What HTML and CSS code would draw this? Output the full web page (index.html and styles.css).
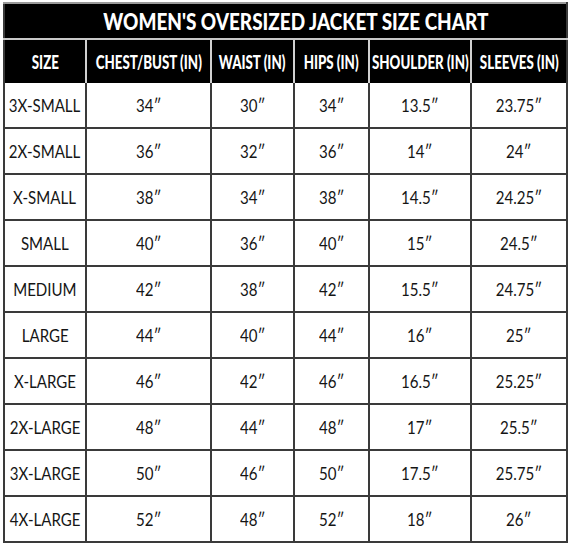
FILE: index.html
```html
<!DOCTYPE html>
<html>
<head>
<meta charset="utf-8">
<link rel="stylesheet" href="styles.css">
</head>
<body>
<table class="chart">
  <colgroup>
    <col class="c1"><col class="c2"><col class="c3"><col class="c4"><col class="c5"><col class="c6">
  </colgroup>
  <thead>
    <tr class="title-row"><th colspan="6"><div class="box"><span class="title">WOMEN'S OVERSIZED JACKET SIZE CHART</span></div></th></tr>
    <tr class="head-row">
      <th><div class="box"><span class="hd">SIZE</span></div></th>
      <th><div class="box"><span class="hd">CHEST/BUST (IN)</span></div></th>
      <th><div class="box"><span class="hd">WAIST (IN)</span></div></th>
      <th><div class="box"><span class="hd">HIPS (IN)</span></div></th>
      <th><div class="box"><span class="hd">SHOULDER (IN)</span></div></th>
      <th><div class="box"><span class="hd">SLEEVES (IN)</span></div></th>
    </tr>
  </thead>
  <tbody>
    <tr><td><div class="box"><span class="v">3X-SMALL</span></div></td><td><div class="box"><span class="v">34″</span></div></td><td><div class="box"><span class="v">30″</span></div></td><td><div class="box"><span class="v">34″</span></div></td><td><div class="box"><span class="v">13.5″</span></div></td><td><div class="box"><span class="v">23.75″</span></div></td></tr>
    <tr><td><div class="box"><span class="v">2X-SMALL</span></div></td><td><div class="box"><span class="v">36″</span></div></td><td><div class="box"><span class="v">32″</span></div></td><td><div class="box"><span class="v">36″</span></div></td><td><div class="box"><span class="v">14″</span></div></td><td><div class="box"><span class="v">24″</span></div></td></tr>
    <tr><td><div class="box"><span class="v">X-SMALL</span></div></td><td><div class="box"><span class="v">38″</span></div></td><td><div class="box"><span class="v">34″</span></div></td><td><div class="box"><span class="v">38″</span></div></td><td><div class="box"><span class="v">14.5″</span></div></td><td><div class="box"><span class="v">24.25″</span></div></td></tr>
    <tr><td><div class="box"><span class="v">SMALL</span></div></td><td><div class="box"><span class="v">40″</span></div></td><td><div class="box"><span class="v">36″</span></div></td><td><div class="box"><span class="v">40″</span></div></td><td><div class="box"><span class="v">15″</span></div></td><td><div class="box"><span class="v">24.5″</span></div></td></tr>
    <tr><td><div class="box"><span class="v">MEDIUM</span></div></td><td><div class="box"><span class="v">42″</span></div></td><td><div class="box"><span class="v">38″</span></div></td><td><div class="box"><span class="v">42″</span></div></td><td><div class="box"><span class="v">15.5″</span></div></td><td><div class="box"><span class="v">24.75″</span></div></td></tr>
    <tr><td><div class="box"><span class="v">LARGE</span></div></td><td><div class="box"><span class="v">44″</span></div></td><td><div class="box"><span class="v">40″</span></div></td><td><div class="box"><span class="v">44″</span></div></td><td><div class="box"><span class="v">16″</span></div></td><td><div class="box"><span class="v">25″</span></div></td></tr>
    <tr><td><div class="box"><span class="v">X-LARGE</span></div></td><td><div class="box"><span class="v">46″</span></div></td><td><div class="box"><span class="v">42″</span></div></td><td><div class="box"><span class="v">46″</span></div></td><td><div class="box"><span class="v">16.5″</span></div></td><td><div class="box"><span class="v">25.25″</span></div></td></tr>
    <tr><td><div class="box"><span class="v">2X-LARGE</span></div></td><td><div class="box"><span class="v">48″</span></div></td><td><div class="box"><span class="v">44″</span></div></td><td><div class="box"><span class="v">48″</span></div></td><td><div class="box"><span class="v">17″</span></div></td><td><div class="box"><span class="v">25.5″</span></div></td></tr>
    <tr><td><div class="box"><span class="v">3X-LARGE</span></div></td><td><div class="box"><span class="v">50″</span></div></td><td><div class="box"><span class="v">46″</span></div></td><td><div class="box"><span class="v">50″</span></div></td><td><div class="box"><span class="v">17.5″</span></div></td><td><div class="box"><span class="v">25.75″</span></div></td></tr>
    <tr><td><div class="box"><span class="v">4X-LARGE</span></div></td><td><div class="box"><span class="v">52″</span></div></td><td><div class="box"><span class="v">48″</span></div></td><td><div class="box"><span class="v">52″</span></div></td><td><div class="box"><span class="v">18″</span></div></td><td><div class="box"><span class="v">26″</span></div></td></tr>
  </tbody>
</table>
</body>
</html>
```
FILE: styles.css
```css
html, body {
  margin: 0;
  padding: 0;
  background: #ffffff;
}
body {
  padding: 2px 3px 0 3px;
}
.chart {
  border-collapse: collapse;
  table-layout: fixed;
  width: 563px;
  border: 2px solid #3a3a3a;
  border-top-color: #9a9a9a;
}
.c1 { width: 82px; }
.c2 { width: 125px; }
.c3 { width: 83px; }
.c4 { width: 75px; }
.c5 { width: 102px; }
.c6 { width: 96px; }

.box {
  display: flex;
  justify-content: center;
  align-items: center;
  white-space: nowrap;
}
.title-row th {
  background: #000;
  color: #fff;
  height: 34px;
  padding: 0 0 0 20px;
  vertical-align: middle;
  border-bottom: 2px solid #c8c8c8;
}
.title {
  display: inline-block;
  font-family: "Lato", "Open Sans", sans-serif;
  font-weight: 900;
  font-size: 22px;
  transform: scaleX(0.86);
}
.head-row th {
  background: #000;
  color: #fff;
  height: 43px;
  padding: 0;
  vertical-align: middle;
  border-left: 2px solid #d0d0d0;
}
.head-row th:first-child { border-left: none; }
.hd {
  display: inline-block;
  font-family: "Lato", "Open Sans", sans-serif;
  font-weight: 900;
  font-size: 18px;
  transform: scaleX(0.74);
}

tbody td {
  height: 44px;
  padding: 0;
  vertical-align: middle;
  color: #151515;
  border: 2px solid #3a3a3a;
}
tbody tr:first-child td { border-top: none; }
.v {
  display: inline-block;
  font-family: "Lato", "Open Sans", sans-serif;
  font-size: 17.5px;
  transform: scaleX(0.86);
}
```
